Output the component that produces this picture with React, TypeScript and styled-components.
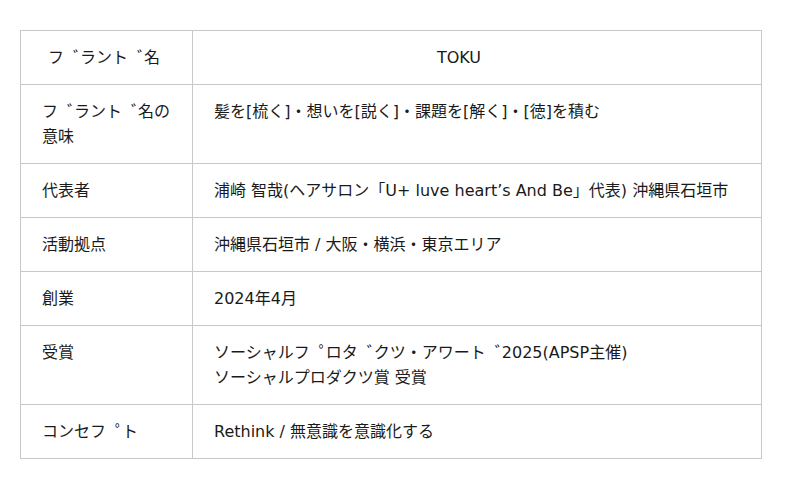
import { Fragment, type ReactNode } from 'react';
import styled, { createGlobalStyle } from 'styled-components';

const GlobalStyle = createGlobalStyle`
  body {
    margin: 0;
    background: #ffffff;
    font-family: "DejaVu Sans", "Noto Sans CJK JP", sans-serif;
    color: #1a1a1a;
  }
`;

const Page = styled.div`
  padding: 30px 20px 0;
`;

const Table = styled.table`
  width: 742px;
  border-collapse: collapse;
  table-layout: fixed;
  font-size: 16px;
  line-height: 25px;
  border: 1px solid #dddddd;
`;

const LabelCol = styled.col`
  width: 172px;
`;

const Cell = styled.td<{ $head?: boolean; $label?: boolean }>`
  border: 1px solid #c8c8c8;
  padding: 14px 20px 14px 21px;
  vertical-align: top;
  text-align: ${(p) => (p.$head && !p.$label ? 'center' : 'left')};
  ${(p) => (p.$head && !p.$label ? 'padding-right: 57px;' : '')}
  ${(p) => (p.$head && p.$label ? 'padding-left: 27px;' : '')}
`;

const Line = styled.span`
  display: block;
`;

// detached voiced marks: pushed to the right side of their slot, same total advance
const Mark = styled.span`
  margin-left: 9px;
  letter-spacing: -9px;
`;

function withMarks(text: string): ReactNode {
  return text.split(/([゛゜])/).map((part, i) =>
    part === '゛' || part === '゜' ? <Mark key={i}>{part}</Mark> : <Fragment key={i}>{part}</Fragment>
  );
}

const rows: { label: string; value: string[] }[] = [
  { label: 'フ゛ラント゛名の意味', value: ['髪を[梳く]・想いを[説く]・課題を[解く]・[徳]を積む'] },
  { label: '代表者', value: ['浦崎 智哉(ヘアサロン「U+ luve heart’s And Be」代表) 沖縄県石垣市'] },
  { label: '活動拠点', value: ['沖縄県石垣市 / 大阪・横浜・東京エリア'] },
  { label: '創業', value: ['2024年4月'] },
  {
    label: '受賞',
    value: ['ソーシャルフ゜ロタ゛クツ・アワート゛2025(APSP主催)', 'ソーシャルプロダクツ賞 受賞'],
  },
  { label: 'コンセフ゜ト', value: ['Rethink / 無意識を意識化する'] },
];

export default function App() {
  return (
    <>
      <GlobalStyle />
      <Page>
        <Table>
          <colgroup>
            <LabelCol />
            <col />
          </colgroup>
          <tbody>
            <tr>
              <Cell $head $label>{withMarks('フ゛ラント゛名')}</Cell>
              <Cell $head>TOKU</Cell>
            </tr>
            {rows.map((row, i) => (
              <tr key={i}>
                <Cell>{withMarks(row.label)}</Cell>
                <Cell>
                  {row.value.map((v, j) => (
                    <Line key={j}>{withMarks(v)}</Line>
                  ))}
                </Cell>
              </tr>
            ))}
          </tbody>
        </Table>
      </Page>
    </>
  );
}
